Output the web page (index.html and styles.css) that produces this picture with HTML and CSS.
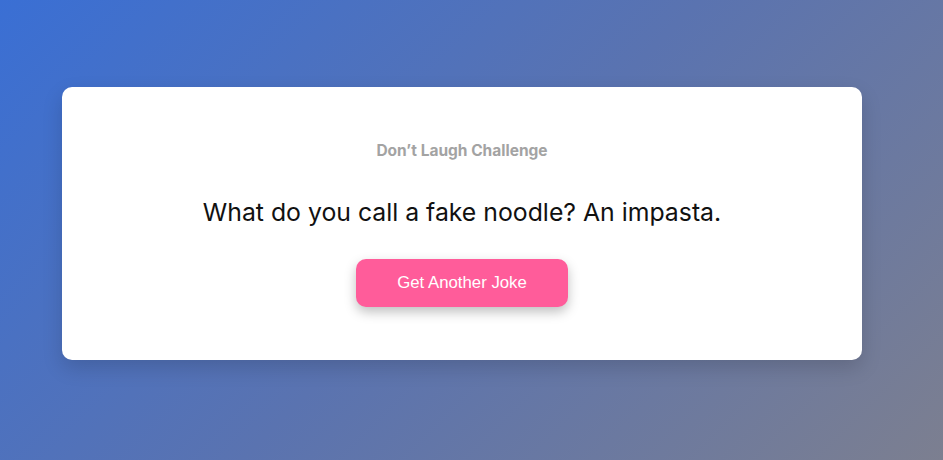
FILE: index.html
```html
<!DOCTYPE html>
<html lang="en">
<head>
<meta charset="utf-8">
<title>Don't Laugh Challenge</title>
<link rel="stylesheet" href="styles.css">
</head>
<body>
<main class="page">
  <section class="card">
    <h3 class="title">Don’t Laugh Challenge</h3>
    <p class="joke">What do you call a fake noodle? An impasta.</p>
    <button class="btn" type="button">Get Another Joke</button>
  </section>
</main>
</body>
</html>
```

FILE: styles.css
```css
* { box-sizing: border-box; }
html, body { margin: 0; height: 100%; }
body {
  background: linear-gradient(135deg, #3a6fd4 0%, #5a73b0 50%, #7c7f90 100%);
  font-family: Inter, "Noto Sans", sans-serif;
}
.page {
  min-height: 100%;
  display: flex;
  justify-content: center;
  align-items: center;
  padding: 0 81px 13px 62px;
}
.card {
  width: 800px;
  background: #fff;
  border-radius: 10px;
  box-shadow: 0 8px 20px rgba(0,0,0,0.15);
  display: flex;
  flex-direction: column;
  align-items: center;
  padding: 54px 40px 53px;
}
.title {
  margin: 0;
  font-size: 15.5px;
  font-weight: 700;
  color: #a3a3a3;
  line-height: 20px;
}
.joke {
  margin: 34px 0 0;
  font-size: 24.8px;
  color: #111;
  line-height: 34px;
}
.btn {
  margin-top: 30px;
  border: 0;
  border-radius: 10px;
  background: #ff5c9a;
  color: #fff;
  font-family: "Liberation Sans", Arial, sans-serif;
  font-size: 16.8px;
  padding: 15px 41px;
  line-height: 18px;
  box-shadow: 0 5px 12px rgba(0,0,0,0.25);
  cursor: pointer;
}
```
